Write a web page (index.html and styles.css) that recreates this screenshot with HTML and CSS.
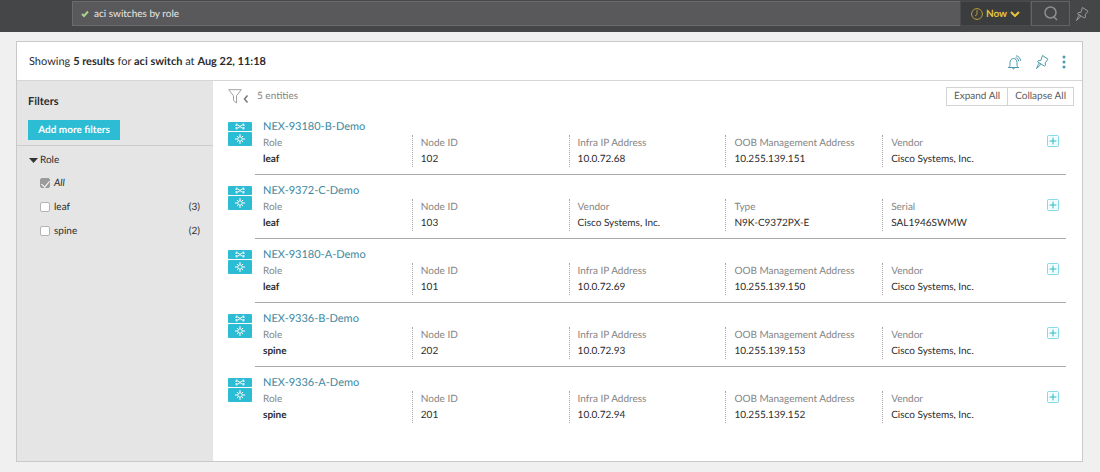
FILE: index.html
```html
<!DOCTYPE html>
<html lang="en">
<head>
<meta charset="utf-8">
<meta name="viewport" content="width=device-width, initial-scale=1">
<title>aci switches by role</title>
<link rel="stylesheet" href="styles.css">
</head>
<body>
<svg class="sprite" aria-hidden="true">
  <symbol id="pin" viewBox="0 0 14 16"><path d="M7.500 1.500 13 5.200 10.200 8.800l.3 2.500-1.200.7-6.800-4.200.8-1.200 2.500-.1zM5.500 9.700 4.800 11.500 1.500 14.500l1.800-4 1-1.600"/></symbol>
  <symbol id="switch" viewBox="0 0 24 24">
    <rect width="24" height="9" rx="1" fill="#2cbcd4"/><rect y="10" width="24" height="14" rx="1" fill="#2cbcd4"/>
    <g fill="none" stroke="#fff"><path d="M8 3h2l4 3h2M8 6h2l4-3h2"/><path d="M14.500 2H16v2M14.500 7H16V5M9.500 2H8v2M9.500 7H8V5" stroke-width=".8"/>
    <circle cx="12" cy="17" r="2.200"/><path d="M12 12v2.500M12 19.500V22M7 17h2.500M14.500 17H17"/><path d="M9 14l1.300 1.300M15 14l-1.300 1.300M9 20l1.300-1.300M15 20l-1.300-1.300"/></g>
  </symbol>
  <symbol id="plus" viewBox="0 0 12 12"><rect x=".5" y=".5" width="11" height="11" rx="1" fill="#f4fdfe" stroke="#83dbe8"/><path d="M6 2.500v7M2.500 6h7" fill="none" stroke="#35b5cb"/></symbol>
</svg>

<header class="topbar">
  <label class="search">
    <svg class="search-check" viewBox="0 0 8 8" aria-hidden="true"><path d="M1 4l2 2 4-4.500"/></svg>
    <input class="search-input" type="text" value="aci switches by role" aria-label="Search">
  </label>
  <button class="time-button" type="button">
    <svg class="clock" viewBox="0 0 12 12" aria-hidden="true"><circle cx="6" cy="6" r="5.400"/><path d="M6 2v4.500L4 8M6 0v1M6 11v1M0 6h1M11 6h1"/></svg>
    Now
    <svg class="chevron" viewBox="0 0 10 6" aria-hidden="true"><path d="M1 1l4 4 4-4"/></svg>
  </button>
  <button class="search-button" type="button" aria-label="Run search">
    <svg viewBox="0 0 14 15" aria-hidden="true"><circle cx="6.500" cy="6.500" r="5.500"/><path d="M9.500 10.500l3.500 3.500"/></svg>
  </button>
  <button class="icon-button top-pin" type="button" aria-label="Pin"><svg class="pin"><use href="#pin"/></svg></button>
</header>

<main class="panel">
  <div class="panel-head">
    <h1 class="summary">Showing <b>5 results</b> for <b>aci switch</b> at <b>Aug 22, 11:18</b></h1>
    <div class="actions">
      <button class="icon-button" type="button" aria-label="Alert"><svg class="bell" viewBox="0 0 15 15"><path d="M1 12.500h11M2.500 12c.6-1 .5-2 .5-4.500C3 5.300 4.500 3.500 6.500 3.500S10 5.300 10 7.500c0 2.500 0 3.500.6 4.500M5.500 13c.3 1.200 1.700 1.200 2 0M8.500 2.600c1.800.3 3 1.600 3.200 3.700M9 .8c2.600.3 4.300 2.200 4.600 5"/></svg></button>
      <button class="icon-button" type="button" aria-label="Pin results"><svg class="pin"><use href="#pin"/></svg></button>
      <button class="icon-button" type="button" aria-label="More"><svg class="dots" viewBox="0 0 4 14"><circle cx="2" cy="2" r="1.500"/><circle cx="2" cy="7" r="1.500"/><circle cx="2" cy="12" r="1.500"/></svg></button>
    </div>
  </div>

  <div class="panel-body">
    <aside class="filters">
      <div class="filters-head">
        <h2 class="filters-title">Filters</h2>
        <button class="add-filters" type="button">Add more filters</button>
      </div>
      <details class="group" open>
        <summary class="group-title"><svg class="caret" viewBox="0 0 9 5" aria-hidden="true"><path d="M0 0h9L4.500 5z"/></svg>Role</summary>
        <label class="option"><input class="tick" type="checkbox" checked><i>All</i></label>
        <label class="option"><input class="tick" type="checkbox"><span>leaf</span><span class="count">(3)</span></label>
        <label class="option"><input class="tick" type="checkbox"><span>spine</span><span class="count">(2)</span></label>
      </details>
    </aside>

    <section class="results">
      <div class="toolbar">
        <button class="icon-button" type="button" aria-label="Hide filters"><svg class="funnel" viewBox="0 0 21 15"><path d="M.7.700h12.600L8.500 6.800v7.200l-3-2.500V6.800z"/><path class="funnel-arrow" d="M19.500 6.500 16.500 10l3 3.500"/></svg></button>
        <span class="entities">5 entities</span>
        <div class="toggle">
          <button class="toggle-button" type="button">Expand All</button>
          <button class="toggle-button" type="button">Collapse All</button>
        </div>
      </div>

      <article class="entity">
        <svg class="switch" aria-hidden="true"><use href="#switch"/></svg>
        <div class="entity-main">
          <a class="name" href="#">NEX-93180-B-Demo</a>
          <dl class="field"><dt>Role</dt><dd>leaf</dd></dl>
          <dl class="field"><dt>Node ID</dt><dd>102</dd></dl>
          <dl class="field"><dt>Infra IP Address</dt><dd>10.0.72.68</dd></dl>
          <dl class="field"><dt>OOB Management Address</dt><dd>10.255.139.151</dd></dl>
          <dl class="field"><dt>Vendor</dt><dd>Cisco Systems, Inc.</dd></dl>
          <button class="icon-button expand" type="button" aria-label="Expand NEX-93180-B-Demo"><svg class="plus"><use href="#plus"/></svg></button>
        </div>
      </article>
      <article class="entity">
        <svg class="switch" aria-hidden="true"><use href="#switch"/></svg>
        <div class="entity-main">
          <a class="name" href="#">NEX-9372-C-Demo</a>
          <dl class="field"><dt>Role</dt><dd>leaf</dd></dl>
          <dl class="field"><dt>Node ID</dt><dd>103</dd></dl>
          <dl class="field"><dt>Vendor</dt><dd>Cisco Systems, Inc.</dd></dl>
          <dl class="field"><dt>Type</dt><dd>N9K-C9372PX-E</dd></dl>
          <dl class="field"><dt>Serial</dt><dd>SAL1946SWMW</dd></dl>
          <button class="icon-button expand" type="button" aria-label="Expand NEX-9372-C-Demo"><svg class="plus"><use href="#plus"/></svg></button>
        </div>
      </article>
      <article class="entity">
        <svg class="switch" aria-hidden="true"><use href="#switch"/></svg>
        <div class="entity-main">
          <a class="name" href="#">NEX-93180-A-Demo</a>
          <dl class="field"><dt>Role</dt><dd>leaf</dd></dl>
          <dl class="field"><dt>Node ID</dt><dd>101</dd></dl>
          <dl class="field"><dt>Infra IP Address</dt><dd>10.0.72.69</dd></dl>
          <dl class="field"><dt>OOB Management Address</dt><dd>10.255.139.150</dd></dl>
          <dl class="field"><dt>Vendor</dt><dd>Cisco Systems, Inc.</dd></dl>
          <button class="icon-button expand" type="button" aria-label="Expand NEX-93180-A-Demo"><svg class="plus"><use href="#plus"/></svg></button>
        </div>
      </article>
      <article class="entity">
        <svg class="switch" aria-hidden="true"><use href="#switch"/></svg>
        <div class="entity-main">
          <a class="name" href="#">NEX-9336-B-Demo</a>
          <dl class="field"><dt>Role</dt><dd>spine</dd></dl>
          <dl class="field"><dt>Node ID</dt><dd>202</dd></dl>
          <dl class="field"><dt>Infra IP Address</dt><dd>10.0.72.93</dd></dl>
          <dl class="field"><dt>OOB Management Address</dt><dd>10.255.139.153</dd></dl>
          <dl class="field"><dt>Vendor</dt><dd>Cisco Systems, Inc.</dd></dl>
          <button class="icon-button expand" type="button" aria-label="Expand NEX-9336-B-Demo"><svg class="plus"><use href="#plus"/></svg></button>
        </div>
      </article>
      <article class="entity">
        <svg class="switch" aria-hidden="true"><use href="#switch"/></svg>
        <div class="entity-main">
          <a class="name" href="#">NEX-9336-A-Demo</a>
          <dl class="field"><dt>Role</dt><dd>spine</dd></dl>
          <dl class="field"><dt>Node ID</dt><dd>201</dd></dl>
          <dl class="field"><dt>Infra IP Address</dt><dd>10.0.72.94</dd></dl>
          <dl class="field"><dt>OOB Management Address</dt><dd>10.255.139.152</dd></dl>
          <dl class="field"><dt>Vendor</dt><dd>Cisco Systems, Inc.</dd></dl>
          <button class="icon-button expand" type="button" aria-label="Expand NEX-9336-A-Demo"><svg class="plus"><use href="#plus"/></svg></button>
        </div>
      </article>
    </section>
  </div>
</main>
</body>
</html>
```
FILE: styles.css
```css
* { box-sizing: border-box; }

body {
  margin: 0;
  min-height: 100vh;
  display: flex;
  flex-direction: column;
  background: #f0f0f0;
  color: #2b2c2e;
  font-family: Lato, "Liberation Sans", sans-serif;
  font-size: 10px;
  line-height: 16px;
  text-rendering: geometricPrecision;
}

svg { display: block; fill: none; }
button, input { font: inherit; color: inherit; text-rendering: inherit; }
button { padding: 0; cursor: pointer; }
h1, h2, dl, dd { margin: 0; }

.sprite { position: absolute; width: 0; height: 0; }
.icon-button { border: 0; background: none; }

/* Top bar */
.topbar {
  display: flex;
  align-items: stretch;
  padding: 1px 11px 6px 72px;
  background: #454648;
}
.search {
  flex: 1;
  display: flex;
  align-items: center;
  gap: 5px;
  height: 25px;
  padding-left: 8px;
  background: #59595b;
  border: 1px solid #6a6b6d;
  border-right: 0;
}
.search-check { width: 8px; height: 8px; stroke: #a9d18e; stroke-width: 2; }
.search-input {
  flex: 1;
  min-width: 0;
  padding: 0;
  border: 0;
  outline: 0;
  background: none;
  color: #e8e8e8;
}
.time-button, .search-button {
  display: flex;
  align-items: center;
  justify-content: center;
  border: 1px solid #626365;
  background: #3b3c3e;
}
.time-button { width: 71px; gap: 3px; color: #e6c33c; font-weight: 700; border-color: #4a4b4d; }
.clock { width: 12px; height: 12px; stroke: #b59a38; }
.chevron { width: 10px; height: 6px; stroke: #e6c33c; stroke-width: 2; }
.search-button { width: 39px; background: #454648; }
.search-button svg { width: 14px; height: 15px; stroke: #8e8f91; stroke-width: 1.5; }
.top-pin { margin-left: 5px; color: #9a9b9d; }
.pin { width: 14px; height: 16px; stroke: currentColor; }

/* Panel */
.panel {
  flex: 1;
  display: flex;
  flex-direction: column;
  margin: 9px 17px 10px 16px;
  background: #fff;
  border: 1px solid #c9c9c9;
}
.panel-head {
  display: flex;
  align-items: center;
  justify-content: space-between;
  padding: 12px 16px 10px 12px;
  border-bottom: 1px solid #d6d6d6;
}
.summary { font-size: 11px; font-weight: 400; }
.actions { display: flex; align-items: center; gap: 13px; color: #4b9aad; }
.bell { width: 15px; height: 15px; stroke: currentColor; }
.dots { width: 4px; height: 14px; fill: currentColor; }
.panel-body { flex: 1; display: flex; }

/* Filters */
.filters { width: 196px; background: #e5e5e5; }
.filters-head { padding: 13px 11px 5px; border-bottom: 1px solid #cccccc; }
.filters-title { font-size: 11px; font-weight: 700; }
.add-filters {
  display: block;
  width: 92px;
  height: 20px;
  margin-top: 10px;
  border: 0;
  background: #2cbcd4;
  color: #fff;
  font-weight: 700;
}
.group { padding: 6px 12px; }
.group-title {
  display: flex;
  align-items: center;
  gap: 2px;
  margin-bottom: 7px;
  list-style: none;
}
.caret { width: 9px; height: 5px; fill: #333436; }
.option {
  display: flex;
  align-items: center;
  gap: 4px;
  height: 16px;
  margin: 0 1px 8px 11px;
}
.tick {
  appearance: none;
  width: 10px;
  height: 10px;
  margin: 0;
  border: 1px solid #b4b4b4;
  border-radius: 2px;
  background: #fff;
}
.tick:checked { display: grid; place-items: center; background: #9b9b9b; border-color: #9b9b9b; }
.tick:checked::before {
  content: "";
  width: 4px;
  height: 7px;
  margin-bottom: 2px;
  border: solid #fff;
  border-width: 0 1px 1px 0;
  rotate: 40deg;
}
.count { margin-left: auto; }

/* Results */
.results { flex: 1; min-width: 0; padding: 0 16px 0 15px; }
.toolbar { display: flex; align-items: center; height: 30px; }
.funnel { width: 21px; height: 15px; stroke: #a2a2a2; }
.funnel-arrow { stroke: #777; stroke-width: 1.5; }
.entities { margin-left: 8px; color: #858585; }
.toggle { display: flex; margin: 0 -8px 0 auto; }
.toggle-button {
  height: 19px;
  padding: 0 7px;
  border: 1px solid #d3d3d3;
  background: #fff;
  color: #5c5c5c;
}
.toggle-button + .toggle-button { border-left: 0; }

.entity { display: flex; gap: 3px; }
.switch { width: 24px; height: 24px; margin-top: 11px; }
.entity-main {
  flex: 1;
  display: grid;
  grid-template-columns: repeat(5, 1fr) 27px;
  padding: 8px 0 7px;
  border-bottom: 1px solid #a9a9a9;
}
.entity:last-child .entity-main { border-bottom: 0; }
.name {
  grid-column: 1 / -1;
  justify-self: start;
  padding-left: 8px;
  color: #4189a0;
  font-size: 11px;
  text-decoration: none;
}
.field { padding-left: 8px; white-space: nowrap; }
.field + .field { border-left: 1px dotted #a6a6a6; }
.field dt { color: #858585; }
.name + .field dd { font-weight: 700; }
.expand { display: flex; justify-self: start; align-self: start; margin-left: 8px; }
.plus { width: 12px; height: 12px; }
```
